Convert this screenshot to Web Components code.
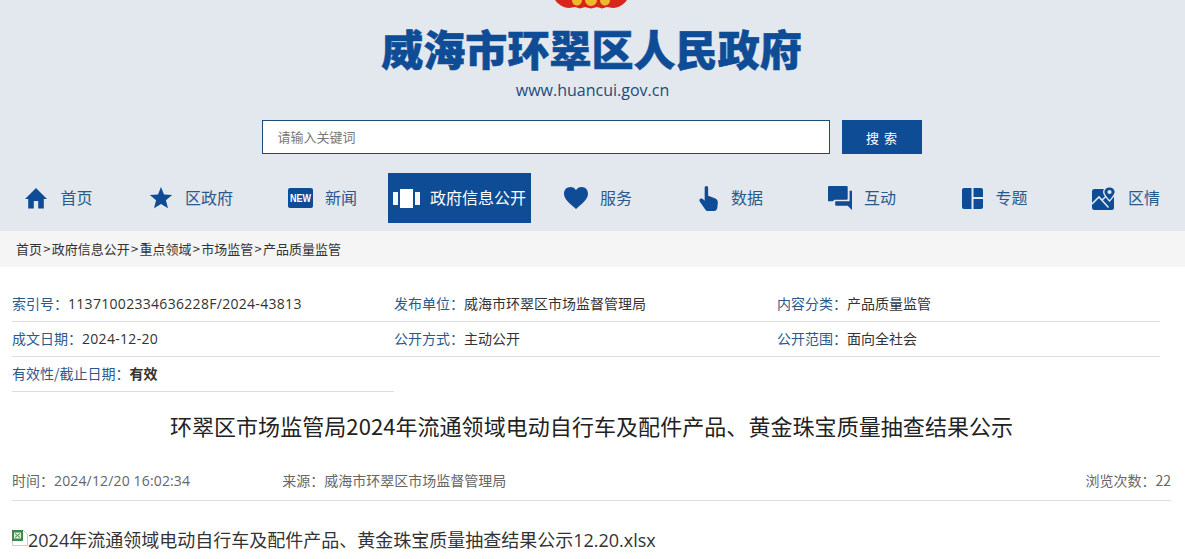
<!DOCTYPE html>
<html lang="zh">
<head>
<meta charset="utf-8">
<title>环翠区人民政府</title>
<style>
  html, body { margin: 0; padding: 0; background: #fff; }
  body { font-family: "Noto Sans CJK SC", "Open Sans", sans-serif; height: 559px; overflow: hidden; }
</style>
</head>
<body>
<site-header></site-header>
<main-nav>
  <nav-item icon="home" w="117" text="首页"></nav-item>
  <nav-item icon="star" w="148" text="区政府"></nav-item>
  <nav-item icon="new" w="115" text="新闻"></nav-item>
  <nav-item icon="open" w="143" text="政府信息公开" active></nav-item>
  <nav-item icon="heart" w="134" text="服务"></nav-item>
  <nav-item icon="hand" w="132" text="数据"></nav-item>
  <nav-item icon="chat" w="130" text="互动"></nav-item>
  <nav-item icon="layout" w="136" text="专题"></nav-item>
  <nav-item icon="map" w="126" text="区情"></nav-item>
</main-nav>
<bread-crumb>首页<span>&gt;</span>政府信息公开<span>&gt;</span>重点领域<span>&gt;</span>市场监管<span>&gt;</span>产品质量监管</bread-crumb>
<meta-table>
  <meta-cell label="索引号：" value="11371002334636228F/2024-43813"></meta-cell>
  <meta-cell label="发布单位：" value="威海市环翠区市场监督管理局"></meta-cell>
  <meta-cell label="内容分类：" value="产品质量监管"></meta-cell>
  <meta-cell label="成文日期：" value="2024-12-20"></meta-cell>
  <meta-cell label="公开方式：" value="主动公开"></meta-cell>
  <meta-cell label="公开范围：" value="面向全社会"></meta-cell>
  <meta-cell label="有效性/截止日期：" value="有效" strong></meta-cell>
</meta-table>
<article-view
  heading="环翠区市场监管局2024年流通领域电动自行车及配件产品、黄金珠宝质量抽查结果公示"
  time-label="时间："
  time="2024/12/20 16:02:34"
  source="来源：威海市环翠区市场监督管理局"
  views="浏览次数：22"
  file="2024年流通领域电动自行车及配件产品、黄金珠宝质量抽查结果公示12.20.xlsx"></article-view>

<script>
const ICONS = {
  home: '<svg width="24" height="24" viewBox="0 0 24 24"><path fill="#0e4c96" d="M12 2 1 13h3.200v9.500h5.600V15h4.400v7.500h5.600V13H23z"/></svg>',
  star: '<svg width="24" height="24" viewBox="0 0 24 24"><path fill="#0e4c96" d="M12 1l3 7.600 8.200.5-6.300 5.200 2.100 8L12 17.900l-7 4.400 2.100-8L.8 9.100l8.200-.5z"/></svg>',
  new: '<svg width="25" height="20" viewBox="0 0 25 20"><rect width="25" height="20" rx="2" fill="#0e4c96"/><text x="12.500" y="14" text-anchor="middle" font-family="Liberation Sans, sans-serif" font-weight="700" font-size="10.500" fill="#fff" textLength="21" lengthAdjust="spacingAndGlyphs">NEW</text></svg>',
  open: '<svg width="27" height="19" viewBox="0 0 27 19"><path fill="#f3f6fa" d="M0 3h5v13H0zM22 3h5v13h-5z"/><path fill="#fff" d="M7 0h13v19H7z"/></svg>',
  heart: '<svg width="24" height="22" viewBox="0 0 24 22"><path fill="#0e4c96" d="M12 22C5 16 0 12 0 6.500 0 2.800 2.800 0 6.400 0 8.800 0 10.800 1.200 12 3.200 13.200 1.200 15.200 0 17.600 0 21.200 0 24 2.800 24 6.500 24 12 19 16 12 22z"/></svg>',
  hand: '<svg width="20" height="25" viewBox="0 0 20 26"><path fill="#0e4c96" d="M5.500 1.800C5.500.8 6.300 0 7.300 0s1.800.8 1.800 1.800v8.400l7 2.500c2 .8 3.300 2.300 3.100 4.600l-.6 5.700c-.2 1.800-1.500 3-3.300 3H9c-1.200 0-2.200-.6-2.900-1.600L.6 16.500c-.8-1.300-.7-2.500.2-3.200 1-.7 2.200-.5 3.100.4l1.600 1.600z"/></svg>',
  chat: '<svg width="24" height="24" viewBox="0 0 25 25"><path fill="#0e4c96" d="M1 0h18.500c.6 0 1 .4 1 1v12.300c0 .6-.4 1-1 1H7L4.800 16H0V1c0-.6.4-1 1-1zM22.500 5H25v20l-4.500-4.500H8.500c-.6 0-1-.4-1-1V16h15z"/></svg>',
  layout: '<svg width="21" height="21" viewBox="0 0 21 21"><path fill="#0e4c96" d="M2 0h7.500v21H2c-1.100 0-2-.9-2-2V2C0 .9.900 0 2 0zM11.500 0H19c1.100 0 2 .9 2 2v7h-9.500zM11.500 11H21v8c0 1.100-.9 2-2 2h-7.500z"/></svg>',
  map: '<svg width="24" height="24" viewBox="0 0 24 24"><rect x="0" y="3" width="22" height="21" rx="2.500" fill="#0e4c96"/><path fill="none" stroke="#e3e7ee" stroke-width="1.600" d="M0 18l7-7 9.500 10.500M10 14l5-4.500"/><path fill="#0e4c96" stroke="#e3e7ee" stroke-width="1.400" d="M17.500.7c3.300 0 5.800 2.400 5.800 5.300 0 2.300-2.300 5.200-5.800 9-3.500-3.800-5.800-6.700-5.800-9 0-2.900 2.500-5.300 5.800-5.300z"/><circle cx="17.500" cy="6" r="2.100" fill="#e3e7ee"/></svg>'
};

class SiteHeader extends HTMLElement {
  constructor() {
    super();
    this.attachShadow({ mode: 'open' });
    this.shadowRoot.innerHTML = `
      <style>
        :host { display: flex; flex-direction: column; align-items: center; background: #e3e7ee; height: 173px; position: relative; overflow: hidden; }
        .emblem { position: absolute; left: 555px; top: 0; }
        h1 { margin: 25px 0 0 -2px; font: 900 42px/46px "Noto Sans CJK SC", sans-serif; color: #0e4c96; letter-spacing: .05px; -webkit-text-stroke: .6px #0e4c96; }
        .url { margin-top: 8px; font: 16px/22px "Open Sans", sans-serif; color: #1e4a7c; }
        form { display: flex; gap: 12px; margin: 19px 0 0 -2px; }
        .box { height: 30px; padding: 0 0 2px 15px; border: 1px solid #1d4a78; background: #fff; display: flex; align-items: center; width: 551px; font-size: 13px; color: #777; }
        .btn { width: 80px; height: 34px; background: #0e4c96; color: #fff; font-size: 13px; display: flex; align-items: center; justify-content: center; gap: 5px; }
      </style>
      <svg class="emblem" width="72" height="9" viewBox="0 0 72 9">
        <path fill="#d9261c" d="M0 0h72c-3 4-8 8-14 8l-6-1-5 1.500-5-1.500-6 1.500-6-1.500-5 1.500-5-1.500-6 1C8 8 3 4 0 0z"/>
        <path fill="#f0b92a" d="M17 0h10c0 3-2 5.500-5 5.500S17 3 17 0zM30 0h12c0 3-3 6-6 6s-6-3-6-6zM45 0h10c0 3-2 5.500-5 5.500S45 3 45 0z"/>
      </svg>
      <h1>威海市环翠区人民政府</h1>
      <div class="url">www.huancui.gov.cn</div>
      <form><div class="box">请输入关键词</div><div class="btn"><span>搜</span><span>索</span></div></form>
    `;
  }
}

class MainNav extends HTMLElement {
  constructor() {
    super();
    this.attachShadow({ mode: 'open' });
    this.shadowRoot.innerHTML = `
      <style>
        :host { display: flex; background: #e3e7ee; height: 58px; align-items: flex-start; overflow: hidden; }
        ::slotted([active]) { margin-left: 8px; }
      </style>
      <slot></slot>
    `;
  }
}

class NavItem extends HTMLElement {
  constructor() {
    super();
    this.attachShadow({ mode: 'open' });
  }
  connectedCallback() {
    this.style.width = this.getAttribute('w') + 'px';
    this.shadowRoot.innerHTML = `
      <style>
        :host { display: flex; align-items: center; justify-content: center; height: 50px; gap: 12px; font-size: 16px; color: #2a5a8c; flex: none; }
        :host([active]) { background: #0e4c96; color: #fff; gap: 10px; }
        span { margin-bottom: 2px; }
        svg { display: block; }
      </style>
      ${ICONS[this.getAttribute('icon')]}<span>${this.getAttribute('text')}</span>
    `;
  }
}

class BreadCrumb extends HTMLElement {
  constructor() {
    super();
    this.attachShadow({ mode: 'open' });
    this.shadowRoot.innerHTML = `
      <style>
        :host { display: block; background: #f5f5f5; height: 36px; line-height: 36px; padding-left: 16px; font-size: 13px; color: #333; }
        ::slotted(span) { margin: 0 1.250px; }
      </style>
      <slot></slot>
    `;
  }
}

class MetaTable extends HTMLElement {
  constructor() {
    super();
    this.attachShadow({ mode: 'open' });
    this.shadowRoot.innerHTML = `
      <style>
        :host { display: grid; grid-template-columns: 382px 383px 383px; margin: 20px 0 0 12px; width: 1148px; }
      </style>
      <slot></slot>
    `;
  }
}

class MetaCell extends HTMLElement {
  constructor() {
    super();
    this.attachShadow({ mode: 'open' });
  }
  connectedCallback() {
    const value = this.getAttribute('value');
    this.shadowRoot.innerHTML = `
      <style>
        :host { display: block; height: 35px; line-height: 32px; border-bottom: 1px solid #ddd; box-sizing: border-box; font-size: 14px; color: #333; white-space: nowrap; }
        .k { color: #2a5a8c; }
        .v { font-family: "Open Sans", "Noto Sans CJK SC", sans-serif; letter-spacing: .3px; }
        .v.cn { letter-spacing: 0; font-family: "Noto Sans CJK SC", sans-serif; }
        :host([strong]) .v { font-weight: 700; }
      </style>
      <span class="k">${this.getAttribute('label')}</span><span class="v ${/^[0-9]/.test(value) ? '' : 'cn'}">${value}</span>
    `;
  }
}

class ArticleView extends HTMLElement {
  constructor() {
    super();
    this.attachShadow({ mode: 'open' });
  }
  connectedCallback() {
    this.shadowRoot.innerHTML = `
      <style>
        :host { display: block; padding: 0 14px 0 12px; }
        h2 { margin: 17px 0 0; font: 400 22px/32px "Noto Sans CJK SC", "Open Sans", sans-serif; color: #222; text-align: center; letter-spacing: .06px; }
        .info { display: flex; margin-top: 22px; height: 33px; padding-bottom: 4px; align-items: center; border-bottom: 1px solid #ddd; font-size: 14px; color: #666; }
        .num { font-family: "Open Sans", sans-serif; letter-spacing: .15px; }
        .src { margin-left: 92px; }
        .views { margin-left: auto; }
        .file { display: flex; align-items: flex-end; margin-top: 24px; font: 18px/30px "Open Sans", "Noto Sans CJK SC", sans-serif; color: #333; }
        .file svg { flex: none; margin: 0 0 9px 0; }
      </style>
      <h2>${this.getAttribute('heading')}</h2>
      <div class="info">
        <span>${this.getAttribute('time-label')}<span class="num">${this.getAttribute('time')}</span></span>
        <span class="src">${this.getAttribute('source')}</span>
        <span class="views">${this.getAttribute('views')}</span>
      </div>
      <div class="file">
        <svg width="16" height="16" viewBox="0 0 16 16"><path fill="#fff" stroke="#ccc" d="M.5.5h11l4 4v11H.5z"/><rect x="0" y="0" width="11" height="11" fill="#3f8a4a"/><rect x="2" y="2.500" width="7" height="6" fill="#dfeee0"/><path stroke="#3f8a4a" d="M3 3.500l5 4M8 3.500l-5 4"/></svg>
        <span>${this.getAttribute('file')}</span>
      </div>
    `;
  }
}

customElements.define('site-header', SiteHeader);
customElements.define('main-nav', MainNav);
customElements.define('nav-item', NavItem);
customElements.define('bread-crumb', BreadCrumb);
customElements.define('meta-table', MetaTable);
customElements.define('meta-cell', MetaCell);
customElements.define('article-view', ArticleView);
</script>
</body>
</html>
